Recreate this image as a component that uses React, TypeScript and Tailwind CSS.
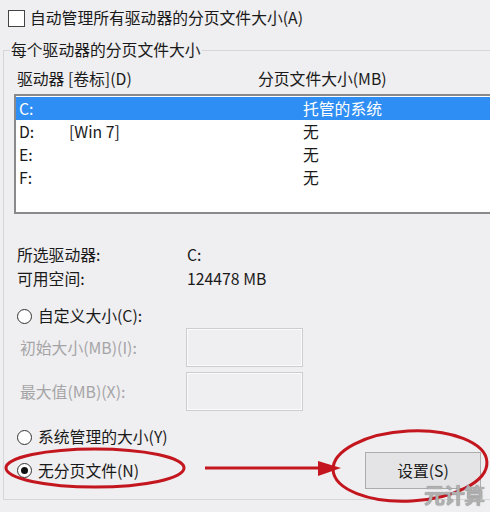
import React from "react";

const Radio = ({ checked = false }: { checked?: boolean }) => (
  <span className="w-[15px] h-[15px] rounded-full border border-[#333] bg-white flex items-center justify-center shrink-0">
    {checked && <span className="w-[7px] h-[7px] rounded-full bg-[#111]" />}
  </span>
);

export default function App() {
  const rows = [
    { d: "C:", l: "", s: "托管的系统", sel: true },
    { d: "D:", l: "[Win 7]", s: "无", sel: false },
    { d: "E:", l: "", s: "无", sel: false },
    { d: "F:", l: "", s: "无", sel: false },
  ];
  return (
    <div
      className="relative w-[490px] h-[512px] overflow-hidden bg-[#efeef0] text-[15.8px] text-[#1a1a1a]"
      style={{ fontFamily: '"Noto Sans CJK SC", "Noto Sans", sans-serif' }}
    >
      {/* top checkbox */}
      <div className="flex items-center h-[20px] mt-[8px] ml-[8px]">
        <span className="w-[17px] h-[17px] border border-[#444] bg-white shrink-0" />
        <span className="ml-[5px] leading-[20px] whitespace-nowrap">自动管理所有驱动器的分页文件大小(A)</span>
      </div>

      {/* group box */}
      <div className="mt-[22px] ml-[3px] w-[500px] h-[450px] border-t border-l border-b border-[#d6d6d8]">
        <div className="-mt-[11px] ml-[6px] px-[1px] w-fit h-[20px] leading-[20px] bg-[#efeef0] whitespace-nowrap">
          每个驱动器的分页文件大小
        </div>

        <div className="flex mt-[9px] h-[20px] leading-[20px] whitespace-nowrap">
          <span className="pl-[13px] w-[254px]">驱动器 [卷标](D)</span>
          <span>分页文件大小(MB)</span>
        </div>

        <div className="mt-[5px] ml-[10px] w-[490px] h-[120px] border-2 border-[#8a8a8c] border-r-0 bg-white pt-[1px]">
          {rows.map((r) => (
            <div
              key={r.d}
              className={`flex items-center h-[23px] leading-[23px] pl-[3px] whitespace-nowrap ${
                r.sel ? "bg-[#2f8ef3] text-white" : ""
              }`}
            >
              <span className="w-[50px]">{r.d}</span>
              <span className="w-[234px]">{r.l}</span>
              <span>{r.s}</span>
            </div>
          ))}
        </div>

        <div className="mt-[29px] flex h-[24px] leading-[24px] whitespace-nowrap">
          <span className="pl-[13px] w-[183px]">所选驱动器:</span>
          <span>C:</span>
        </div>
        <div className="flex h-[24px] leading-[24px] whitespace-nowrap">
          <span className="pl-[13px] w-[183px]">可用空间:</span>
          <span>124478 MB</span>
        </div>

        <div className="mt-[15px] flex items-center h-[20px] pl-[13px] whitespace-nowrap">
          <Radio />
          <span className="ml-[6px] leading-[20px]">自定义大小(C):</span>
        </div>

        <div className="mt-[2px] flex items-center whitespace-nowrap">
          <span className="pl-[16px] w-[182px] text-[#a5a5a7]">初始大小(MB)(I):</span>
          <span className="w-[117px] h-[39px] border border-[#cdcdcf] shadow-[inset_0_0_0_1px_#fbfbfb] bg-[#efeef0]" />
        </div>
        <div className="mt-[5px] flex items-center whitespace-nowrap">
          <span className="pl-[16px] w-[182px] text-[#a5a5a7]">最大值(MB)(X):</span>
          <span className="w-[117px] h-[39px] border border-[#cdcdcf] shadow-[inset_0_0_0_1px_#fbfbfb] bg-[#efeef0]" />
        </div>

        <div className="mt-[16px] flex items-center h-[20px] pl-[13px] whitespace-nowrap">
          <Radio />
          <span className="ml-[6px] leading-[20px]">系统管理的大小(Y)</span>
        </div>

        <div className="mt-[5px] flex items-center h-[37px] whitespace-nowrap">
          <div className="w-[361px] flex items-center pl-[13px]">
            <Radio checked />
            <span className="ml-[6px] leading-[20px]">无分页文件(N)</span>
          </div>
          <button className="w-[116px] h-[37px] border border-[#acacac] bg-[#e4e4e6] flex items-center justify-center leading-none">
            设置(S)
          </button>
        </div>
      </div>

      {/* annotations */}
      <svg className="absolute inset-0 pointer-events-none" width="490" height="512" viewBox="0 0 490 512">
        <ellipse cx="95" cy="468" rx="89" ry="19" fill="none" stroke="#c3161e" strokeWidth="3" />
        <line x1="205" y1="468" x2="324" y2="468" stroke="#c3161e" strokeWidth="3" />
        <polygon points="318,461 341,468 318,476" fill="#c3161e" />
        <ellipse cx="410" cy="466" rx="77" ry="35" fill="none" stroke="#c3161e" strokeWidth="3" transform="rotate(-3 410 466)" />
      </svg>

      <div
        className="absolute right-[6px] bottom-[7px] text-[21px] font-bold leading-[22px] text-[#b0b0b0] tracking-[-1px]"
        style={{ textShadow: "0 0 1px #6a6a6a" }}
      >
        元计算
      </div>
    </div>
  );
}
